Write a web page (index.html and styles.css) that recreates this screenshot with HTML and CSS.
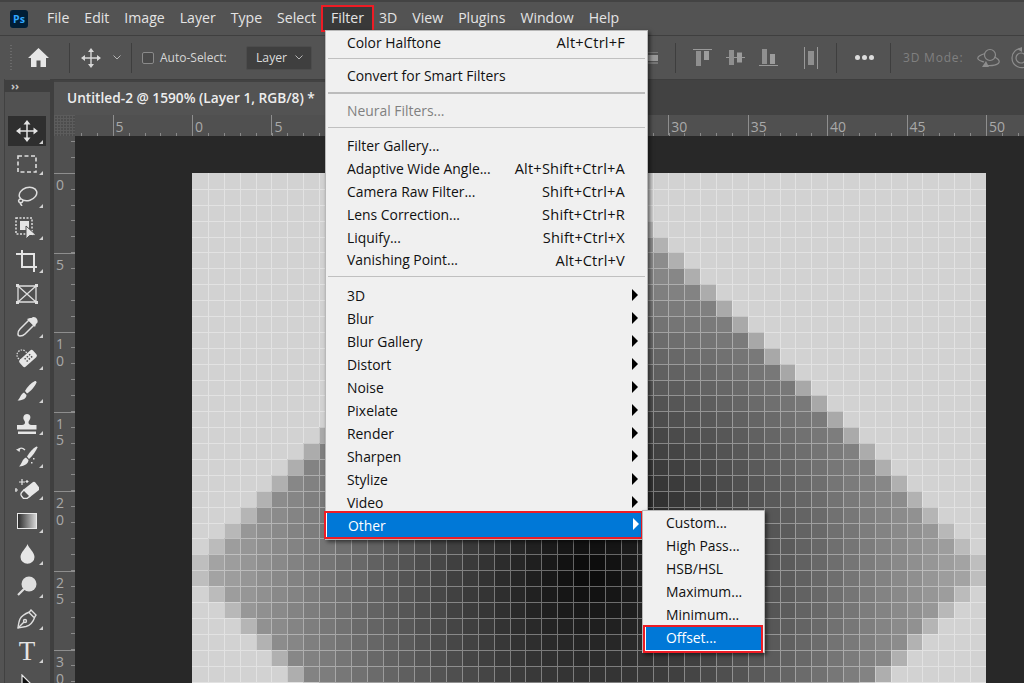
FILE: index.html
```html
<!DOCTYPE html>
<html lang="en">
<head>
<meta charset="utf-8">
<title>Photoshop Filter menu</title>
<link rel="stylesheet" href="styles.css">
</head>
<body>
<div class="app">
  <header class="menubar">
    <div class="ps-logo">Ps</div>
    <nav class="menu-items">
      <span>File</span><span>Edit</span><span>Image</span><span>Layer</span><span>Type</span><span>Select</span><span class="menu-active">Filter</span><span>3D</span><span>View</span><span>Plugins</span><span>Window</span><span>Help</span>
    </nav>
  </header>

  <section class="optionsbar">
    <div class="grip-v"></div>
    <svg class="ic-home" width="21" height="19" viewBox="0 0 21 19"><path d="M10.5 0 21 10h-3v9h-5.5v-6.5h-4V19H3v-9H0z" fill="#e6e6e6"/></svg>
    <div class="vsep sep-home"></div>
    <svg class="ic-move" width="20" height="20" viewBox="0 0 20 20"><path d="M10 2v16M2 10h16" stroke="#d8d8d8" stroke-width="1.4"/><path d="M10 0l3 4H7zM10 20l3-4H7zM0 10l4-3v6zM20 10l-4-3v6z" fill="#d8d8d8"/></svg>
    <svg class="ic-chev" width="8" height="5" viewBox="0 0 8 5"><path d="M.5.5 4 4 7.500.5" fill="none" stroke="#b5b5b5"/></svg>
    <div class="vsep sep-chev"></div>
    <div class="checkbox"></div>
    <span class="opt-label">Auto-Select:</span>
    <div class="dropdown"><span>Layer</span><svg width="8" height="5" viewBox="0 0 8 5"><path d="M.5.5 4 4 7.500.5" fill="none" stroke="#b5b5b5"/></svg></div>

    <svg class="al-hidden" width="20" height="12" viewBox="0 0 20 12"><path d="M0 0h18M0 11h18" stroke="#999"/><rect x="4" y="3" width="14" height="6" fill="#999"/></svg>
    <div class="vsep sep-a"></div>
    <svg class="al al-1" width="19" height="17" viewBox="0 0 19 17"><path d="M0 .5h19" stroke="#999"/><rect x="3" y="2" width="5" height="15" fill="#8f8f8f"/><rect x="11" y="2" width="5" height="9" fill="#9c9c9c"/></svg>
    <svg class="al al-2" width="19" height="15" viewBox="0 0 19 15"><path d="M0 7.500h19" stroke="#999"/><rect x="3" y="0" width="5" height="15" fill="#8f8f8f"/><rect x="11" y="2.500" width="5" height="10" fill="#9c9c9c"/></svg>
    <svg class="al al-3" width="19" height="17" viewBox="0 0 19 17"><path d="M0 16.500h19" stroke="#999"/><rect x="3" y="0" width="5" height="15" fill="#8f8f8f"/><rect x="11" y="5" width="5" height="10" fill="#9c9c9c"/></svg>
    <svg class="al al-4" width="14" height="22" viewBox="0 0 14 22"><path d="M.5 0v22M13.500 0v22" stroke="#999"/><rect x="4" y="4" width="6" height="14" fill="#8f8f8f"/></svg>
    <div class="vsep sep-b"></div>
    <div class="dots"><i></i><i></i><i></i></div>
    <div class="vsep sep-c"></div>
    <span class="mode-label">3D Mode:</span>
    <svg class="mode-1" width="24" height="20" viewBox="0 0 24 20"><g fill="none" stroke="#8d8d8d" stroke-width="1.200"><circle cx="13" cy="7" r="5.500"/><path d="M8 5.500C3 7 0 9 1 11s5 2.500 6 3M17 9c3 1 6 3 5 5.500S15 18 10 17.500"/></g><path d="M5 19h7l-3-6z" fill="#8d8d8d"/></svg>
    <svg class="mode-2" width="24" height="22" viewBox="0 0 24 22"><g fill="none" stroke="#8d8d8d" stroke-width="1.200"><path d="M2 11A9.500 9.500 0 0 1 11 1.500M2 11a9.500 9.500 0 0 0 16 7"/><circle cx="11" cy="11" r="5"/></g><path d="M7 2l5-2v5z" fill="#8d8d8d"/></svg>
  </section>

  <main class="main">
    <aside class="toolbar">
      <div class="tool-head">››</div>
      <div class="tool-grip"></div>
      <div class="tools">
        <div class="tool active"><svg width="22" height="22" viewBox="0 0 22 22"><path d="M11 2v18M2 11h18" stroke="#e4e4e4" stroke-width="1.500"/><path d="M11 0l3.500 4.500h-7zM11 22l3.500-4.500h-7zM0 11l4.500-3.500v7zM22 11l-4.500-3.500v7z" fill="#e4e4e4"/></svg></div>
        <div class="tool"><svg width="20" height="18" viewBox="0 0 20 18"><rect x="1" y="1" width="18" height="16" fill="none" stroke="#dedede" stroke-width="1.600" stroke-dasharray="4 2.500"/></svg></div>
        <div class="tool"><svg width="22" height="20" viewBox="0 0 22 20"><g fill="none" stroke="#dedede" stroke-width="1.500"><ellipse cx="12" cy="8" rx="9" ry="6.500" transform="rotate(-18 12 8)"/><path d="M5 13c-3 0-3 3-1 3.500s3-.5 3-2.500M4 17l2 3"/></g></svg></div>
        <div class="tool"><svg width="24" height="24" viewBox="0 0 24 24"><rect x="1" y="1" width="16" height="16" fill="none" stroke="#dedede" stroke-width="1.500" stroke-dasharray="2 1.500"/><rect x="5" y="4" width="9" height="9" fill="#e4e4e4"/><path d="M11 9v13l3.500-3.500 3 .0 3.500-.5z" fill="#e4e4e4" stroke="#4f4f4f"/></svg></div>
        <div class="tool"><svg width="23" height="22" viewBox="0 0 23 22"><path d="M6 0v17h15M0 4h18v18" fill="none" stroke="#e4e4e4" stroke-width="2"/></svg></div>
        <div class="tool"><svg width="22" height="20" viewBox="0 0 22 20"><path d="M2 2h18v16H2zM2 2l18 16M20 2 2 18" fill="none" stroke="#dedede" stroke-width="1.300"/><path d="M0 0h3v3H0zM19 0h3v3h-3zM0 17h3v3H0zM19 17h3v3h-3z" fill="#dedede"/></svg></div>
        <div class="tool"><svg width="21" height="21" viewBox="0 0 21 21"><path d="M12 4 3 13c-1.500 1.500-2 3.500-2 5 0 1 1 2 2 2 1.500 0 3.500-.5 5-2l9-9z" fill="none" stroke="#e0e0e0" stroke-width="1.500"/><path d="M10 3l8 8 1-3c2-1 2-3 1-5s-4-3-5.500-1L13 2z" fill="#e4e4e4"/></svg></div>
        <div class="tool"><svg width="22" height="21" viewBox="0 0 22 21"><circle cx="6" cy="7" r="5" fill="none" stroke="#dedede" stroke-dasharray="1.500 1.200" stroke-width="1.200"/><rect x="3" y="6" width="18" height="9" rx="2" transform="rotate(-42 12 10.500)" fill="#e6e6e6"/><g fill="#4f4f4f" transform="rotate(-42 12 10.500)"><rect x="9" y="8" width="1.500" height="1.500"/><rect x="12" y="8" width="1.500" height="1.500"/><rect x="15" y="8" width="1.500" height="1.500"/><rect x="9" y="11" width="1.500" height="1.500"/><rect x="12" y="11" width="1.500" height="1.500"/><rect x="15" y="11" width="1.500" height="1.500"/></g></svg></div>
        <div class="tool"><svg width="20" height="20" viewBox="0 0 20 20"><path d="M8 10c2-4 6-8 10-10 1 0 1.500 .5 1.500 1.500C18 5.500 14 10 10 12.500z" fill="#e6e6e6"/><path d="M7 11.500l2.500 2.500c0 3-3 5.500-9 5.500C3 18 3.500 13 7 11.500z" fill="#e6e6e6"/></svg></div>
        <div class="tool"><svg width="20" height="20" viewBox="0 0 20 20"><path d="M10 0c3 0 4 3 3 5-.5 1.500-1.500 2-1.500 3.500 0 1.500 1 2.500 3 2.500h5v4.500H0V11h5c2 0 3-1 3-2.500C8 7 7 6.500 6.500 5 6 3 7 0 10 0zM1 17.500h18V20H1z" fill="#e6e6e6"/></svg></div>
        <div class="tool"><svg width="22" height="21" viewBox="0 0 22 21"><path d="M11 10.500C13 7 17 2 20.500.500c.5 0 1 .5 1 1C20 5 16.500 10 13 13z" fill="#e6e6e6"/><path d="M10 11.500l2.500 2.500c0 3-3 6-9.500 6.500C6 18 6 13 10 11.500z" fill="#e6e6e6"/><path d="M9 4C6.500 1.500 4 1.500 2 4" fill="none" stroke="#e0e0e0" stroke-width="1.300"/><path d="M0 3.500l4.500-1.500-1 4z" fill="#e0e0e0"/><path d="M17 12h1.500v1.500H17zM15 16h1.500v1.500H15z" fill="#dedede"/></svg></div>
        <div class="tool"><svg width="24" height="20" viewBox="0 0 24 20"><rect x="9" y="6" width="15" height="10" rx="1.500" transform="rotate(-38 16 11)" fill="#e6e6e6"/><path d="M9 11l6 6-3 2.500H8.500L6.500 17c-1-1.500-.5-3 .5-4z" fill="#4f4f4f" stroke="#e6e6e6" stroke-width="1.300"/><path d="M7 0v6M4 3h6M1 9v4M-1 11h4M12 1v3M10.500 2.500h3" stroke="#e6e6e6" stroke-width="1.200"/></svg></div>
        <div class="tool"><div class="gradient-box"></div></div>
        <div class="tool"><svg width="15" height="20" viewBox="0 0 15 20"><path d="M7.500 0c1 4 7 8 7 13a7 6.800 0 0 1-14 0C.5 8 6.500 4 7.500 0z" fill="#e6e6e6"/></svg></div>
        <div class="tool"><svg width="20" height="20" viewBox="0 0 20 20"><circle cx="12" cy="8" r="7.500" fill="#dedede"/><path d="M7 13 1 19" stroke="#dedede" stroke-width="2.200"/></svg></div>
        <div class="tool"><svg width="20" height="20" viewBox="0 0 20 20"><g fill="none" stroke="#dedede" stroke-width="1.400"><path d="M14 1l5 5-1 1.500c-1.500 4.500-5 9-9 10L1 19c.5-4 1-7 2-9 1.500-3 4.500-5 9.500-7z"/><path d="M1 19l6-6"/><circle cx="8" cy="12" r="1.500"/><path d="M11.500 3l5.500 5.500"/></g></svg></div>
        <div class="tool"><span class="type-t">T</span></div>
        <div class="tool"><svg width="13" height="20" viewBox="0 0 13 20"><path d="M1 1v17l4-4 3 6 3-1.500-3-5.500h5z" fill="#111" stroke="#e6e6e6" stroke-width="1.200"/></svg></div>
      </div>
    </aside>

    <section class="document">
      <div class="tabrow"><div class="tab">Untitled-2 @ 1590% (Layer 1, RGB/8) *</div></div>
      <div class="hruler-row">
        <div class="ruler-corner"></div>
        <div class="hruler">
          <span>5</span><span>0</span><span>5</span><span></span><span></span><span></span><span></span><span>30</span><span>35</span><span>40</span><span>45</span><span>50</span>
        </div>
      </div>
      <div class="work">
        <div class="vruler">
          <span>0</span><span>5</span><span>1<br>0</span><span>1<br>5</span><span>2<br>0</span><span>2<br>5</span><span>3<br>0</span>
        </div>
        <div class="pasteboard"><div class="canvas" id="canvas"></div></div>
      </div>
    </section>
  </main>
</div>

<div class="filter-menu">
  <div class="fm-item"><span>Color Halftone</span><kbd>Alt+Ctrl+F</kbd></div>
  <div class="fm-sep"></div>
  <div class="fm-item"><span>Convert for Smart Filters</span></div>
  <div class="fm-sep thick"></div>
  <div class="fm-item disabled"><span>Neural Filters...</span></div>
  <div class="fm-sep third"></div>
  <div class="fm-item"><span>Filter Gallery...</span></div>
  <div class="fm-item"><span>Adaptive Wide Angle...</span><kbd>Alt+Shift+Ctrl+A</kbd></div>
  <div class="fm-item"><span>Camera Raw Filter...</span><kbd>Shift+Ctrl+A</kbd></div>
  <div class="fm-item"><span>Lens Correction...</span><kbd>Shift+Ctrl+R</kbd></div>
  <div class="fm-item"><span>Liquify...</span><kbd>Shift+Ctrl+X</kbd></div>
  <div class="fm-item"><span>Vanishing Point...</span><kbd>Alt+Ctrl+V</kbd></div>
  <div class="fm-sep last"></div>
  <div class="fm-item sub"><span>3D</span></div>
  <div class="fm-item sub"><span>Blur</span></div>
  <div class="fm-item sub"><span>Blur Gallery</span></div>
  <div class="fm-item sub"><span>Distort</span></div>
  <div class="fm-item sub"><span>Noise</span></div>
  <div class="fm-item sub"><span>Pixelate</span></div>
  <div class="fm-item sub"><span>Render</span></div>
  <div class="fm-item sub"><span>Sharpen</span></div>
  <div class="fm-item sub"><span>Stylize</span></div>
  <div class="fm-item sub"><span>Video</span></div>
  <div class="fm-item sub selected"><span>Other</span></div>
</div>

<div class="sub-menu">
  <div class="sm-item">Custom...</div>
  <div class="sm-item">High Pass...</div>
  <div class="sm-item">HSB/HSL</div>
  <div class="sm-item">Maximum...</div>
  <div class="sm-item">Minimum...</div>
  <div class="sm-item selected">Offset...</div>
</div>
<script src="script.js"></script>
</body>
</html>
```
FILE: styles.css
```css
* { box-sizing: border-box; }
html, body { margin: 0; height: 100%; overflow: hidden; }
body { background: #535353; font-family: "Open Sans", "Noto Sans", sans-serif; color: #e2e2e2; position: relative; }
.app { width: 1024px; height: 683px; display: flex; flex-direction: column; overflow: hidden; }

/* menu bar */
.menubar { height: 35px; flex: none; display: flex; align-items: center; padding-left: 10px; background: #535353; border-top: 2px solid #434343; }
.ps-logo { width: 18px; height: 18px; border-radius: 3px; background: #001e36; color: #31a8ff; font-size: 10.5px; font-weight: 700; line-height: 18px; text-align: center; }
.menu-items { display: flex; margin-left: 11.5px; font-size: 14.1px; color: #e4e4e4; }
.menu-items span { padding: 0 7.5px; height: 23px; line-height: 22px; }
.menu-active { background: #393939; outline: 2px solid #ee1c25; outline-offset: 0; }

/* options bar */
.optionsbar { height: 44px; flex: none; display: flex; align-items: center; background: #535353; border-top: 1px solid #3f3f3f; padding-left: 10px; position: relative; }
.optionsbar > * { flex: none; }
.grip-v { width: 2px; height: 26px; background: repeating-linear-gradient(to bottom, #6a6a6a 0 1px, transparent 1px 3px); }
.ic-home { margin-left: 16px; }
.vsep { width: 1px; height: 30px; background: #3e3e3e; }
.sep-home { margin-left: 20px; }
.ic-move { margin-left: 11px; }
.ic-chev { margin-left: 12px; }
.sep-chev { margin-left: 10px; }
.checkbox { width: 12px; height: 12px; margin-left: 10px; border: 1px solid #8a8a8a; border-radius: 2px; background: #4a4a4a; }
.opt-label { margin-left: 6px; width: 68px; font-size: 12px; color: #d6d6d6; white-space: nowrap; }
.dropdown { margin-left: 18px; width: 66px; height: 24px; background: #3f3f3f; border: 1px solid #4c4c4c; border-radius: 2px; display: flex; align-items: center; justify-content: space-between; padding: 0 8px 0 9px; font-size: 12.2px; color: #dcdcdc; }
.al-hidden { margin-left: 328px; }
.sep-a { margin-left: 15px; }
.al-1 { margin-left: 17px; }
.al-2 { margin-left: 14px; }
.al-3 { margin-left: 14px; }
.al-4 { margin-left: 26px; }
.sep-b { margin-left: 18px; }
.dots { display: flex; gap: 2px; margin-left: 18px; }
.dots i { width: 5px; height: 5px; border-radius: 50%; background: #dcdcdc; }
.sep-c { margin-left: 16px; }
.mode-label { margin-left: 12px; width: 54px; font-size: 12px; letter-spacing: .8px; color: #808080; white-space: nowrap; }
.mode-1 { margin-left: 20px; }
.mode-2 { margin-left: 9px; }

/* main */
.main { flex: 1; display: flex; min-height: 0; }
.toolbar { width: 54px; flex: none; background: #515151; border-left: 1px solid #535353; display: flex; flex-direction: column; position: relative; box-shadow: inset 3px 0 0 #535353, inset 4px 0 0 #414141, inset -4px 0 0 #3f3f3f; padding: 0 4px 0 3px; }
.tool-head { height: 15px; margin-top: 1px; background: #3f3f3f; font-size: 11px; line-height: 12px; padding-left: 7px; color: #c8c8c8; font-weight: 700; }
.tool-grip { height: 4px; margin: 6px 11px 0; background: repeating-linear-gradient(to right, #727272 0 1px, transparent 1px 2px); }
.tools { margin-top: 17px; display: flex; flex-direction: column; }
.tool { height: 32.5px; display: flex; align-items: center; justify-content: center; position: relative; }
.tool::after { content: ""; position: absolute; right: 7px; bottom: 5px; border-style: solid; border-width: 0 0 4px 4px; border-color: transparent transparent #d0d0d0 transparent; }
.tool:last-child::after, .tool:nth-child(6)::after { display: none; }
.tool.active { background: #2f2f2f; height: 30px; margin: 1px 4px 1.500px; }
.tool.active::after { right: 3px; bottom: 2px; }
.gradient-box { width: 20px; height: 16px; border: 1px solid #e8e8e8; background: linear-gradient(to right, #2d2d2d, #d4d4d4); }
.type-t { font-family: "Liberation Serif", serif; font-size: 27px; line-height: 27px; color: #e4e4e4; }

/* document */
.document { flex: 1; display: flex; flex-direction: column; min-width: 0; }
.tabrow { height: 36px; flex: none; background: #424242; padding-top: 2px; border-top: 1px solid #3e3e3e; }
.tab { width: 300px; height: 33px; background: #535353; font-size: 13.7px; font-weight: 600; color: #ededed; padding-left: 13px; line-height: 32px; white-space: nowrap; }
.hruler-row { height: 21px; flex: none; display: flex; }
.ruler-corner { width: 21px; flex: none; background-color: #4d4d4d; background-image: repeating-linear-gradient(to right, #5c5c5c 0 1px, transparent 1px 3px), repeating-linear-gradient(to bottom, #5c5c5c 0 1px, transparent 1px 3px); }
.hruler { flex: 1; display: flex; padding-left: 37.6px; overflow: hidden; background: #505050 repeating-linear-gradient(to right, #8a8a8a 0 1px, transparent 1px 15.88px) 5.84px 100% / 100% 3px no-repeat; }
.hruler span { flex: 0 0 79.4px; height: 20px; border-left: 1px solid #8e8e8e; padding-left: 2px; font-size: 14px; line-height: 23px; color: #a9a9a9; }
.work { flex: 1; display: flex; min-height: 0; }
.vruler { width: 21px; flex: none; padding-top: 37px; overflow: hidden; background: #505050 repeating-linear-gradient(to bottom, #8a8a8a 0 1px, transparent 1px 15.88px) 100% 5.3px / 4px 100% no-repeat; display: flex; flex-direction: column; }
.vruler span { flex: 0 0 79.5px; border-top: 1px solid #8e8e8e; padding: 3px 0 0 2px; font-size: 14px; line-height: 16.5px; color: #a9a9a9; }
.pasteboard { flex: 1; background: #282828; padding: 37px 0 0 117px; overflow: hidden; min-width: 0; }
.canvas { width: 794px; display: grid; grid-template-columns: repeat(50, 1fr); grid-auto-rows: 15.9px; }
.cell { border-left: 1px solid rgba(255, 255, 255, .36); border-top: 1px solid rgba(255, 255, 255, .36); }
.cell:nth-child(50n+1) { border-left: 0; }
.cell:nth-child(-n+50) { border-top: 0; }

/* filter menu */
.filter-menu { position: absolute; left: 325px; top: 30px; width: 323px; height: 510px; background: #f0f0f0; border: 1px solid #b8b8b8; padding: 0 1px; box-shadow: 2px 2px 4px rgba(0, 0, 0, .55); font-size: 13.9px; color: #111; }
.fm-item { height: 22.95px; display: flex; align-items: center; justify-content: space-between; padding: 0 21px 0 20px; position: relative; white-space: nowrap; }
.fm-item kbd { font: inherit; font-size: 14.6px; letter-spacing: .2px; }
.fm-item.disabled { color: #808080; }
.fm-item.sub::after { content: ""; position: absolute; right: 8px; top: 5px; border-style: solid; border-width: 6px 0 6px 6px; border-color: transparent transparent transparent #000; }
.fm-sep { height: 1px; background: #c0c0c0; margin: 4.500px 1px 5px; }
.fm-sep.thick { height: 2px; background: #bcbcbc; margin: 4.500px 1px 5.500px; }
.fm-sep.third { margin: 4.500px 1px 6px; }
.fm-sep.last { margin: 5px 1px 7px; }
.fm-item.selected { background: #0078d7; color: #fff; margin: -1px 5px 0 -1px; height: 24px; padding: 1px 21px 0 21px; border-left: 1px solid #fff; outline: 2px solid #ee1c25; }
.fm-item.selected::after { border-left-color: #fff; right: 2px; }

/* submenu */
.sub-menu { position: absolute; left: 642px; top: 510px; width: 123px; height: 143px; background: #f0f0f0; border: 1px solid #b8b8b8; padding-top: 1px; box-shadow: 2px 2px 4px rgba(0, 0, 0, .55); font-size: 13.9px; color: #111; }
.sm-item { height: 23px; line-height: 22px; padding-left: 23px; }
.sm-item.selected { background: #0078d7; color: #fff; margin: 0 3px 0 2px; height: 24px; padding-left: 20px; border-bottom: 1px solid #fff; border-left: 1px solid #fff; outline: 2px solid #ee1c25; }
```
FILE: script.js
```js
// Build the pixel grid of the zoomed-in document from the shape's formula.
var canvas = document.getElementById('canvas');
var frag = document.createDocumentFragment();
for (var row = 0; row < 33; row++) {
  for (var col = 0; col < 50; col++) {
    var c = Math.abs(col - 24.5), r = Math.abs(row - 24.5);
    var l1 = c + r;
    var v = 6.6 * Math.sqrt(c * c + r * r) + 8;
    var g = l1 > 25 ? 210 : (l1 === 25 ? (v + 210) / 2 : v);
    g = Math.round(g);
    var cell = document.createElement('div');
    cell.className = 'cell';
    cell.style.backgroundColor = 'rgb(' + g + ',' + g + ',' + g + ')';
    frag.appendChild(cell);
  }
}
canvas.appendChild(frag);
```
